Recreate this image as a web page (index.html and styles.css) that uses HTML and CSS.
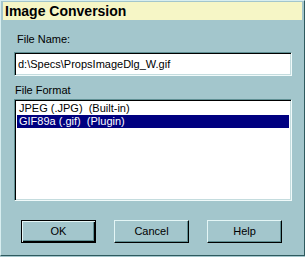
FILE: index.html
```html
<!DOCTYPE html>
<html lang="en">
<head>
    <meta charset="UTF-8">
    <meta name="viewport" content="width=device-width, initial-scale=1.0">
    <title>Image Conversion</title>
    <link rel="stylesheet" href="styles.css">
</head>
<body>
<div class="dialog">
    <div class="title">Image Conversion</div>
    <div class="content">
        <div class="label name-label">File Name:</div>
        <div class="field">d:\Specs\PropsImageDlg_W.gif</div>
        <div class="label format-label">File Format</div>
        <div class="list">
            <div class="item">JPEG (.JPG)&nbsp; (Built-in)</div>
            <div class="item selected">GIF89a (.gif)&nbsp; (Plugin)</div>
        </div>
        <div class="buttons">
            <div class="btn default">OK</div>
            <div class="btn">Cancel</div>
            <div class="btn">Help</div>
        </div>
    </div>
</div>
</body>
</html>
```

FILE: styles.css
```css
body {
    margin: 0;
    background: #a3c6cc;
    font-family: "Liberation Sans", Arial, sans-serif;
    font-size: 11px;
    color: #000;
}

.dialog {
    box-sizing: border-box;
    width: 305px;
    height: 256px;
    background: #a3c6cc;
    border-top: 1px solid #d8eef0;
    border-left: 1px solid #d8eef0;
    border-right: 1px solid #2e5a5e;
    border-bottom: 1px solid #2e5a5e;
    display: flex;
    flex-direction: column;
}

.title {
    margin: 1px 2px 0 2px;
    height: 18px;
    background: #f6f6c6;
    font-size: 14px;
    font-weight: bold;
    line-height: 18px;
    padding-left: 2px;
}

.content {
    display: flex;
    flex-direction: column;
    padding: 0 12px 0 13px;
}

.label {
    line-height: 13px;
    height: 13px;
}

.name-label {
    margin-top: 13px;
    padding-left: 3px;
}

.field {
    box-sizing: border-box;
    height: 24px;
    margin-top: 6px;
    background: #fff;
    border: 1px solid;
    border-color: #5f8f93 #f0fafa #f0fafa #5f8f93;
    box-shadow: inset 1px 1px #000, inset -1px -1px #c4dcde;
    line-height: 22px;
    padding-left: 3px;
}

.format-label {
    margin-top: 8px;
    padding-left: 1px;
}

.list {
    box-sizing: border-box;
    height: 102px;
    margin-top: 2px;
    background: #fff;
    border: 1px solid;
    border-color: #5f8f93 #f0fafa #f0fafa #5f8f93;
    box-shadow: inset 1px 1px #000, inset -1px -1px #c4dcde;
    padding: 2px 2px 0 2px;
}

.item {
    height: 13px;
    line-height: 13px;
    padding-left: 2px;
}

.item.selected {
    background: #000080;
    color: #fff;
}

.buttons {
    display: flex;
    gap: 18px;
    margin-top: 19px;
    padding-left: 7px;
}

.btn {
    box-sizing: border-box;
    width: 75px;
    height: 23px;
    line-height: 20px;
    text-align: center;
    border: 1px solid;
    border-color: #e4f6f6 #000 #000 #e4f6f6;
    box-shadow: inset -1px -1px #5f8f93;
}

.btn.default {
    border: 1px solid #000;
    box-shadow: inset 1px 1px #e4f6f6, inset -1px -1px #000, inset -2px -2px #5f8f93;
}
```
